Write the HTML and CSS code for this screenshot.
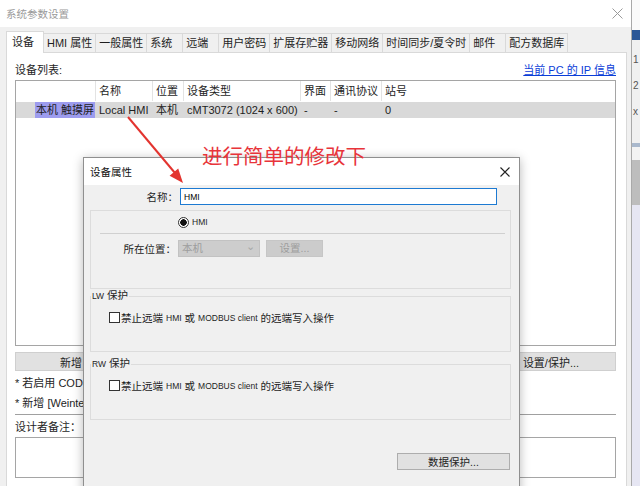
FILE: index.html
```html
<!DOCTYPE html>
<html lang="zh-CN">
<head>
  <meta charset="UTF-8">
  <title>系统参数设置</title>
  <link rel="stylesheet" href="styles.css">
</head>
<body>
  <div class="desk">

    <!-- main window -->
    <div class="win">
      <div class="win-title">
        <span>系统参数设置</span>
        <svg class="win-x" width="11" height="11" viewBox="0 0 11 11"><path d="M0.5 0.5 L10.5 10.5 M10.5 0.5 L0.5 10.5" stroke="#9a9a9a" stroke-width="1"/></svg>
      </div>

      <div class="tabs">
        <div class="tab on">设备</div>
        <div class="tab">HMI 属性</div>
        <div class="tab">一般属性</div>
        <div class="tab">系统</div>
        <div class="tab">远端</div>
        <div class="tab">用户密码</div>
        <div class="tab">扩展存贮器</div>
        <div class="tab">移动网络</div>
        <div class="tab">时间同步/夏令时</div>
        <div class="tab">邮件</div>
        <div class="tab">配方数据库</div>
      </div>

      <div class="panel">
        <div class="list-head">
          <span>设备列表:</span>
          <a href="#" class="ip-link">当前 PC 的 IP 信息</a>
        </div>

        <div class="list">
          <div class="row head">
            <div class="cell"></div>
            <div class="cell">名称</div>
            <div class="cell">位置</div>
            <div class="cell">设备类型</div>
            <div class="cell">界面</div>
            <div class="cell">通讯协议</div>
            <div class="cell last">站号</div>
          </div>
          <div class="row sel">
            <div class="cell first"><span class="hl">本机 触摸屏</span></div>
            <div class="cell">Local HMI</div>
            <div class="cell">本机</div>
            <div class="cell">cMT3072 (1024 x 600)</div>
            <div class="cell">-</div>
            <div class="cell">-</div>
            <div class="cell last">0</div>
          </div>
        </div>

        <div class="btn-row">
          <button class="btn btn-add">新增</button>
          <button class="btn">删除</button>
          <button class="btn">设置...</button>
          <button class="btn">设置/保护...</button>
        </div>

        <p class="note">* 若启用 CODESYS</p>
        <p class="note">* 新增 [Weintek]</p>

        <div class="sep"></div>
        <div class="memo-label">设计者备注：</div>
        <div class="memo"></div>
      </div>
    </div>

    <!-- window behind, right edge -->
    <div class="side">
      <div class="s-top"></div>
      <div class="s-blue"></div>
      <div class="s-gray"><span>1</span><span>2</span><span>x</span></div>
      <div class="s-line"></div>
      <div class="s-light"></div>
      <div class="s-dark"></div>
      <div class="s-lav"></div>
    </div>

    <!-- device properties dialog -->
    <div class="dlg">
      <div class="dlg-title">
        <span>设备属性</span>
        <svg width="10" height="10" viewBox="0 0 10 10"><path d="M0.5 0.5 L9.5 9.5 M9.5 0.5 L0.5 9.5" stroke="#222" stroke-width="1.1"/></svg>
      </div>
      <div class="dlg-body">
        <div class="field name-row">
          <label class="lbl">名称：</label>
          <div class="input"><span class="en">HMI</span></div>
        </div>

        <div class="grp-plain">
          <div class="radio-row"><span class="radio"></span><span class="en">HMI</span></div>
          <div class="rule"></div>
          <div class="field">
            <label class="lbl">所在位置：</label>
            <div class="select">本机<span class="caret">⌄</span></div>
            <div class="dbtn">设置...</div>
          </div>
        </div>

        <fieldset class="grp">
          <legend><span class="en">LW</span> 保护</legend>
          <div class="chk"><span class="box"></span>禁止远端<span class="en">HMI</span>或<span class="en">MODBUS client</span>的远端写入操作</div>
        </fieldset>

        <fieldset class="grp grp-rw">
          <legend><span class="en">RW</span> 保护</legend>
          <div class="chk"><span class="box"></span>禁止远端<span class="en">HMI</span>或<span class="en">MODBUS client</span>的远端写入操作</div>
        </fieldset>

        <div class="dlg-foot">
          <button class="btn btn-data">数据保护...</button>
        </div>
      </div>
    </div>

    <!-- red annotation -->
    <svg class="arrow" width="640" height="486" viewBox="0 0 640 486">
      <line x1="128" y1="117" x2="175" y2="173" stroke="#e3342f" stroke-width="2"/>
      <polygon points="183,183 178.2,168.6 169.6,175.8" fill="#e3342f"/>
    </svg>
    <div class="callout">进行简单的修改下</div>
  </div>
</body>
</html>
```

FILE: styles.css
```css
/* base */
* {
  box-sizing: border-box;
}

body {
  margin: 0;
  width: 640px;
  height: 486px;
  overflow: hidden;
  background: #fff;
  color: #1e1e1e;
  font-family: "Liberation Sans", "Noto Sans CJK SC", sans-serif;
  font-size: 11px;
}

.desk {
  position: relative;
  display: flex;
  height: 486px;
}

/* main window */
.win {
  width: 632px;
  display: flex;
  flex-direction: column;
  background: #f0f0f0;
  border-right: 1px solid #a9a9a9;
}

.win-title {
  height: 27px;
  flex: none;
  display: flex;
  align-items: center;
  justify-content: space-between;
  padding: 0 8px 0 6px;
  background: #fff;
  color: #9a9a9a;
  font-size: 10.5px;
}

.tabs {
  height: 25px;
  flex: none;
  display: flex;
  align-items: flex-end;
  padding-left: 6px;
}

.tab {
  height: 19px;
  line-height: 18px;
  min-width: 37px;
  padding: 0 3px;
  border: 1px solid #d9d9d9;
  border-bottom: none;
  margin-right: -1px;
  background: #f0f0f0;
  white-space: nowrap;
}

.tab.on {
  height: 22px;
  line-height: 20px;
  min-width: 38px;
  padding: 0 5px;
  background: #fff;
  position: relative;
  z-index: 1;
  margin-bottom: -1px;
}

.panel {
  flex: 1;
  margin: 0 4px 0 6px;
  padding: 0 10px 0 8px;
  background: #fff;
  border: 1px solid #d9d9d9;
  border-bottom: none;
}

.list-head {
  display: flex;
  justify-content: space-between;
  align-items: center;
  height: 16px;
  margin: 8px 0 3px;
}

.ip-link {
  color: #0a3dd8;
  text-decoration: underline;
}

/* device list */
.list {
  height: 266px;
  border: 1px solid #a5a5a5;
  background: #fff;
}

.row {
  display: grid;
  grid-template-columns: 80px 57px 31px 117px 30px 51px 1fr;
  white-space: nowrap;
}

.row.head {
  height: 20px;
  line-height: 20px;
}

.row.head .cell {
  border-right: 1px solid #e3e3e3;
}

.row.head .cell.last {
  border-right: none;
}

.row.sel {
  height: 16px;
  line-height: 16px;
  margin-top: 1px;
  background: #d9d9d9;
}

.cell {
  padding-left: 3px;
  overflow: hidden;
}

.cell.first {
  text-align: right;
  padding: 0 1px 0 0;
}

.hl {
  display: inline-block;
  background: #9d9cee;
  padding: 0 1px;
}

/* buttons */
.btn-row {
  display: flex;
  justify-content: space-between;
  margin-top: 6px;
}

.btn {
  height: 19px;
  width: 130px;
  padding: 0;
  background: #e1e1e1;
  border: 1px solid #cfcfcf;
  font-family: inherit;
  font-size: 11px;
  color: #1e1e1e;
}

.btn-add {
  padding-right: 18px;
}

.note {
  margin: 0;
  line-height: 20px;
  white-space: nowrap;
}

.note:first-of-type {
  margin-top: 2px;
}

.sep {
  height: 1px;
  margin-top: 1px;
  background: #a0a0a0;
}

.memo-label {
  line-height: 20px;
  margin-top: 2px;
}

.memo {
  height: 41px;
  border: 1px solid #a5a5a5;
}

/* window behind on the right */
.side {
  width: 8px;
  display: flex;
  flex-direction: column;
  font-size: 10px;
  color: #555;
}

.s-top { height: 30px; background: #fafafa; }
.s-blue { height: 10px; background: #2b5797; }
.s-gray {
  height: 103px;
  background: #f0f0f0;
  display: flex;
  flex-direction: column;
  padding: 14px 0 0 1px;
  gap: 14px;
  line-height: 12px;
}
.s-line { height: 4px; background: #a9b8cc; }
.s-light { height: 13px; background: #f3f3f3; }
.s-dark { height: 45px; background: #bdbdbd; }
.s-lav { flex: 1; background: #e6e6f3; }

/* dialog */
.dlg {
  position: absolute;
  left: 83px;
  top: 157px;
  width: 437px;
  height: 340px;
  background: #f0f0f0;
  border: 1px solid #8f8f8f;
  box-shadow: 0 2px 10px rgba(0, 0, 0, 0.28);
  font-size: 10.5px;
}

.dlg-title {
  height: 27px;
  display: flex;
  align-items: center;
  justify-content: space-between;
  padding: 0 9px 0 6px;
  background: #fff;
  color: #111;
}

.dlg-body {
  padding: 3px 8px 0 6px;
}

.en {
  font-size: 8.5px;
}

.field {
  display: flex;
  align-items: center;
}

.lbl {
  width: 88px;
  text-align: right;
  margin-right: 2px;
}

.input {
  width: 317px;
  height: 17px;
  line-height: 15px;
  padding-left: 3px;
  background: #fff;
  border: 1px solid #1d7ad2;
  color: #000;
}

.grp-plain {
  height: 79px;
  margin-top: 5px;
  border: 1px solid #dcdcdc;
  padding-top: 3px;
}

.grp-plain .lbl {
  width: 85px;
}

.radio-row {
  display: flex;
  align-items: center;
  height: 16px;
  padding-left: 87px;
}

.radio {
  width: 11px;
  height: 11px;
  border-radius: 50%;
  border: 1px solid #333;
  background: radial-gradient(circle, #111 0 3px, #fff 3.5px);
  margin-right: 3px;
}

.rule {
  height: 1px;
  margin: 3px 5px 0 9px;
  background: #d0d0d0;
}

.grp-plain .field {
  margin-top: 6px;
}

.select {
  position: relative;
  width: 82px;
  height: 17px;
  line-height: 15px;
  padding-left: 3px;
  background: #cdcdcd;
  border: 1px solid #c2c2c2;
  color: #9d9d9d;
}

.caret {
  position: absolute;
  right: 4px;
  top: -2px;
  color: #a8a8a8;
}

.dbtn {
  width: 57px;
  height: 17px;
  line-height: 15px;
  margin-left: 6px;
  text-align: center;
  background: #cccccc;
  border: 1px solid #c6c6c6;
  color: #9d9d9d;
}

.grp {
  margin: 0;
  padding: 0 0 0 1px;
  height: 63px;
  border: 1px solid #dcdcdc;
  min-width: 0;
}

.grp legend {
  padding: 0 1px;
  margin-left: -1px;
  line-height: 13px;
}

.grp-rw {
  margin-top: 5px;
}

.chk {
  display: flex;
  align-items: center;
  margin: 7px 0 0 17px;
  white-space: nowrap;
}

.chk .en {
  margin: 0 3px;
}

.box {
  width: 11px;
  height: 11px;
  border: 1px solid #333;
  background: #fff;
  margin-right: 1px;
}

.dlg-foot {
  display: flex;
  justify-content: flex-end;
  margin-top: 33px;
  padding-right: 1px;
}

.btn-data {
  width: 113px;
  height: 17px;
  font-size: 10.5px;
  border-color: #adadad;
}

/* red annotation on top of the screenshot */
.arrow {
  position: absolute;
  left: 0;
  top: 0;
  pointer-events: none;
}

.callout {
  position: absolute;
  left: 202px;
  top: 142px;
  font-family: "Noto Sans CJK SC", sans-serif;
  font-size: 20.5px;
  line-height: 26px;
  color: #e8343a;
  white-space: nowrap;
}
```
